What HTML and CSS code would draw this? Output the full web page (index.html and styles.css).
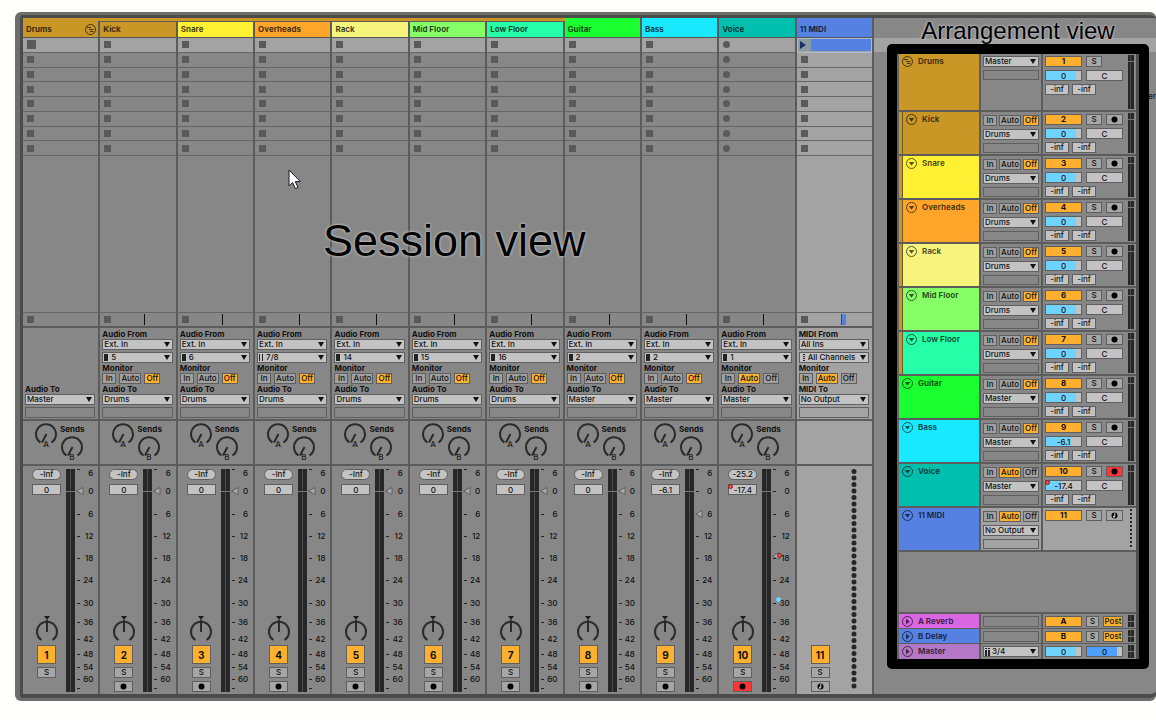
FILE: index.html
```html
<!DOCTYPE html>
<html lang="en">
  <head>
    <meta charset="UTF-8" />
    <meta name="viewport" content="width=device-width, initial-scale=1.0" />
    <link rel="stylesheet" href="styles.css">
    <title>Session view and Arrangement view</title>
  </head>
  <body>
    <main class="app">
      <section class="session">
        <div class="tracks" id="tracks"></div>
        <h1 class="session-title">Session view</h1>
        <svg class="cursor" width="14" height="21" viewBox="0 0 14 21">
          <path d="M1 1 V17 L4.6 13.6 L7.4 19.6 L10 18.4 L7.3 12.6 H12.4 Z" />
        </svg>
      </section>
      <section class="arrangement">
        <h2 class="arrangement-title">Arrangement view</h2>
        <div class="frame">
          <div class="rows" id="rows"></div>
          <div class="rows returns" id="returns"></div>
        </div>
        <span class="hidden-label">er</span>
      </section>
    </main>
    <script src="script.js"></script>
  </body>
</html>
```
FILE: styles.css
```css
* {
  box-sizing: border-box;
}
body {
  margin: 0;
  padding: 12px 0 19px 15px;
  min-height: 100vh;
  display: flex;
  background-color: #fffffb;
  color: #111;
  font-family: Inter, "Open Sans", sans-serif;
  font-size: 8px;
  font-weight: 500;
  line-height: 10px;
}
h1,
h2 {
  margin: 0;
  font-family: "Liberation Sans", Arial, sans-serif;
  font-weight: normal;
  color: #000;
  text-shadow: 0 0 3px #ccc, 0 0 2px #bbb;
  white-space: nowrap;
}
button,
input,
select {
  margin: 0;
  padding: 0;
  font: inherit;
  color: inherit;
  border: 1px solid #5f5f5f;
  border-radius: 0;
  background-color: #c3c3c3;
  appearance: none;
  text-align: center;
}
svg {
  display: block;
}
.app {
  flex: 1;
  display: flex;
  background-color: #878787;
  border: 3px solid #6d6d6d;
  border-left-width: 5px;
  border-right: 0;
  border-radius: 6px;
  box-shadow: inset 3px 3px 0 #4b4b4b, inset 0 -4px 0 #4b4b4b;
  padding: 3px 0 4px 3px;
}

/* Session */
.session {
  flex: 1;
  display: flex;
  position: relative;
}
.tracks {
  flex: 1;
  display: grid;
  grid-template-columns: repeat(11, 1fr);
}
.track {
  display: flex;
  flex-direction: column;
  border-right: 2px solid #5c5c5c;
  min-width: 0;
}
.track.midi {
  background-color: #a3a3a3;
}
.group-bar {
  height: 3px;
  margin-right: -2px;
  background-color: #c99726;
}
.track-name {
  flex: none;
  height: 20px;
  padding: 6px 2px 0 3px;
  display: flex;
  justify-content: space-between;
  border-bottom: 1px solid #555;
  font-weight: 700;
  color: rgba(0, 0, 0, 0.75);
}
.group-bar + .track-name {
  height: 17px;
  padding-top: 3px;
}
.group-bar + .track-name.child {
  padding-top: 2px;
  border-top: 1px solid #5c5c5c;
}
.slots {
  height: 118px;
  display: grid;
  grid-template-rows: repeat(8, 1fr);
}
.slot {
  display: flex;
  align-items: center;
  padding-left: 4px;
  border-width: 0 0 1px;
  border-color: #656565;
  background-color: transparent;
}
.slot:first-child {
  background-color: #a3a3a3;
}
.stop {
  width: 7px;
  height: 7px;
  background-color: #5a5a5a;
}
.stop.big {
  width: 9px;
  height: 9px;
}
.stop.round {
  border-radius: 50%;
}
.slot.clip {
  padding: 0;
  outline: 1px solid #a9bfd0;
  outline-offset: -1px;
}
.clip svg {
  width: 14px;
  height: 12px;
  background-color: #8a9ba3;
}
.clip-body {
  flex: 1;
  height: 12px;
  margin-right: 1px;
  background-color: #5581e3;
}
.empty {
  flex: 1;
}
.stop-row {
  height: 16px;
  display: flex;
  align-items: center;
  padding-left: 4px;
  border-top: 1px solid #656565;
  border-bottom: 2px solid #5c5c5c;
}
.playhead {
  width: 1px;
  height: 11px;
  margin-left: 33px;
  background-color: #111;
}
.midi .playhead {
  width: 5px;
  border-left: 1px solid #444;
  background-color: #5581e3;
}
.io {
  height: 93px;
  padding: 1px 3px 0 2px;
  display: flex;
  flex-direction: column;
  border-bottom: 2px solid #5c5c5c;
}
.io .label {
  font-weight: 700;
}
.io select {
  height: 11px;
}
.io select + select,
.io select + .box {
  margin-top: 2px;
}
.io .label.push {
  margin-top: 55px;
}
select {
  width: 100%;
  padding: 0 10px 0 1px;
  line-height: 9px;
  text-align: left;
  background-repeat: no-repeat;
  background-position: right 2px center, 1px center;
  background-image: url("data:image/svg+xml,%3Csvg xmlns='http://www.w3.org/2000/svg' width='6' height='5'%3E%3Cpath d='M0 0H6L3 5Z' fill='%23111'/%3E%3C/svg%3E");
}
select.mono {
  padding-left: 8px;
  background-image: url("data:image/svg+xml,%3Csvg xmlns='http://www.w3.org/2000/svg' width='6' height='5'%3E%3Cpath d='M0 0H6L3 5Z' fill='%23111'/%3E%3C/svg%3E"), url("data:image/svg+xml,%3Csvg xmlns='http://www.w3.org/2000/svg' width='4' height='7'%3E%3Cpath d='M0 0H4V7H0Z' fill='%23222'/%3E%3C/svg%3E");
}
select.stereo {
  padding-left: 8px;
  background-image: url("data:image/svg+xml,%3Csvg xmlns='http://www.w3.org/2000/svg' width='6' height='5'%3E%3Cpath d='M0 0H6L3 5Z' fill='%23111'/%3E%3C/svg%3E"), url("data:image/svg+xml,%3Csvg xmlns='http://www.w3.org/2000/svg' width='4' height='7'%3E%3Cpath d='M0 0H1V7H0ZM3 0H4V7H3Z' fill='%23222'/%3E%3C/svg%3E");
}
select.channels {
  padding-left: 8px;
  background-image: url("data:image/svg+xml,%3Csvg xmlns='http://www.w3.org/2000/svg' width='6' height='5'%3E%3Cpath d='M0 0H6L3 5Z' fill='%23111'/%3E%3C/svg%3E"), url("data:image/svg+xml,%3Csvg xmlns='http://www.w3.org/2000/svg' width='4' height='7'%3E%3Cpath d='M2 0H4V1H2ZM2 2H4V3H2ZM2 4H4V5H2ZM2 6H4V7H2Z' fill='%23222'/%3E%3C/svg%3E");
}
select.cue {
  background-image: url("data:image/svg+xml,%3Csvg xmlns='http://www.w3.org/2000/svg' width='6' height='5'%3E%3Cpath d='M0 0H6L3 5Z' fill='%23111'/%3E%3C/svg%3E"), url("data:image/svg+xml,%3Csvg xmlns='http://www.w3.org/2000/svg' width='5' height='8'%3E%3Cpath d='M0 0H2V1H0ZM0 2H2V8H0ZM3 0H5V1H3ZM3 2H5V8H3Z' fill='%23222'/%3E%3C/svg%3E");
  padding-left: 8px;
}
.box {
  height: 11px;
  border: 1px solid #5f5f5f;
}
.monitor {
  display: grid;
  grid-template-columns: 14px 22px 16px;
  column-gap: 3px;
}
.monitor button {
  height: 11px;
  line-height: 9px;
  background-color: #a0a0a0;
}
.monitor button.on,
.number {
  background-color: #ffb02e;
}
.sends {
  height: 45px;
  padding: 1px 0 0 11px;
  display: flex;
  gap: 2px;
  border-bottom: 2px solid #5c5c5c;
}
.sends .label {
  display: block;
  padding-top: 2px;
  height: 13px;
  font-weight: 700;
}
.knob {
  display: block;
  height: 28px;
  border: 0;
  background-color: transparent;
}
.knob svg {
  fill: none;
  stroke: #2b2b2b;
  stroke-width: 2px;
  overflow: visible;
}
.knob text,
.knob .mark {
  fill: #1d1d1d;
  stroke: none;
}
.mixer {
  height: 228px;
  padding: 3px 0 2px 9px;
  display: flex;
}
.strip {
  width: 29px;
  display: flex;
  flex-direction: column;
  align-items: center;
}
.peak,
.volume {
  width: 29px;
  height: 11px;
  line-height: 9px;
}
.peak {
  border-radius: 6px;
  margin-bottom: 4px;
}
.volume-wrap {
  position: relative;
}
.volume {
  display: block;
}
.dot {
  position: absolute;
  width: 5px;
  height: 5px;
  border: 1px solid #722;
  border-radius: 50%;
  background-color: #ff4b42;
}
.volume-wrap .dot {
  left: 0;
  top: 0;
}
.scale .dot.red {
  left: 4px;
  top: 84px;
}
.scale .dot.blue {
  left: 3px;
  top: 128px;
  border-color: #6fd3ff;
  background-color: #6fd3ff;
}
.pan {
  margin-top: auto;
  margin-bottom: 1px;
}
.number {
  width: 19px;
  height: 19px;
  font-size: 10px;
  font-weight: 700;
}
.solo,
.arm {
  width: 19px;
  height: 11px;
  margin-top: 3px;
  line-height: 9px;
  background-color: #a6a6a6;
  display: flex;
  align-items: center;
  justify-content: center;
}
.arm.on {
  background-color: #ff3338;
}
.arm.none {
  visibility: hidden;
}
.meter {
  position: relative;
  width: 9px;
  margin-left: 5px;
  border: solid #272727;
  border-width: 0 4px;
  background-color: #4a4a4a;
}
.meter::after {
  content: "";
  position: absolute;
  left: -4px;
  right: -4px;
  top: 22px;
  height: 1px;
  background-color: #777;
}
.scale {
  position: relative;
  flex: 1;
  margin: 0 5px 0 2px;
  display: grid;
  grid-template-rows: 18px 23px 22px 22px 22px 23px 19px 17px 15px 13px 12px 9px 8px;
}
.scale span {
  display: flex;
  justify-content: space-between;
  height: 9px;
  line-height: 9px;
}
.scale span::before {
  content: "";
  width: 3px;
  height: 1px;
  margin-top: 4px;
  background-color: #222;
}
.scale span:first-child::before {
  margin-top: 0;
}
.fader {
  position: absolute;
  left: -2px;
  top: 0;
  width: 9px;
  height: 220px;
  writing-mode: vertical-lr;
  direction: rtl;
  border: 0;
  background-color: transparent;
}
.fader::-webkit-slider-runnable-track {
  width: 9px;
  height: 220px;
}
.fader::-webkit-slider-thumb {
  appearance: none;
  width: 9px;
  height: 8px;
  background: url("data:image/svg+xml,%3Csvg xmlns='http://www.w3.org/2000/svg' width='9' height='8'%3E%3Cpath d='M8 .5V7.5L1.5 4Z' fill='%23aaa' stroke='%23606060'/%3E%3C/svg%3E") no-repeat;
}
.midi-meter {
  margin-left: 16px;
  stroke: #272727;
  stroke-width: 5px;
  stroke-linecap: round;
  stroke-dasharray: 0 6.5;
}
.session-title {
  position: absolute;
  left: 300px;
  top: 197px;
  font-size: 45px;
  line-height: 52px;
}
.cursor {
  position: absolute;
  left: 265px;
  top: 151px;
  fill: #fff;
  stroke: #1a1a2a;
}

/* Arrangement */
.arrangement {
  width: 282px;
  padding: 0 7px 25px 13px;
  display: flex;
  flex-direction: column;
  position: relative;
  background: linear-gradient(#a3a3a3, #a3a3a3) 0 20px / 100% 14px no-repeat;
}
.arrangement-title {
  height: 26px;
  font-size: 24px;
  line-height: 26px;
  text-align: center;
}
.frame {
  flex: 1;
  display: flex;
  flex-direction: column;
  justify-content: space-between;
  padding: 10px;
  border-radius: 5px;
  background: linear-gradient(#878787, #878787) content-box, #000;
}
.hidden-label {
  position: absolute;
  right: 0;
  top: 73px;
}
.rows {
  border-left: 2px solid #666;
  border-right: 3px solid #4f4f4f;
}
.frame .rows:first-child {
  flex: 1;
}
.returns {
  border-top: 2px solid #5c5c5c;
}
.row {
  height: 44px;
  display: grid;
  grid-template-columns: 80px 64px 1fr;
  border-bottom: 2px solid #5c5c5c;
}
.row.tall {
  height: 58px;
}
.row.midi {
  background-color: #a3a3a3;
}
.row-name {
  padding: 2px 0 0 3px;
  display: flex;
  gap: 5px;
  font-weight: 700;
  color: rgba(0, 0, 0, 0.7);
}
.child .row-name {
  border-left: 1px solid #6b5a2a;
  box-shadow: -3px 0 0 #c99726;
  margin-left: 3px;
}
.row-io {
  padding: 3px 2px 0 2px;
  display: flex;
  flex-direction: column;
  gap: 3px;
  border: solid #5c5c5c;
  border-width: 0 2px;
}
.tall .row-io {
  padding-top: 2px;
}
.row-io .monitor {
  column-gap: 2px;
}
.row-io select,
.row-io .box,
.row-io button,
.row-mix button,
.row-mix input {
  flex: none;
  height: 11px;
  line-height: 9px;
}
.row-io .box {
  height: 10px;
}
.row-mix {
  padding: 2px 0 0 2px;
  display: grid;
  grid-template-columns: 37px 16px 17px;
  grid-auto-rows: 11px;
  gap: 3px 4px;
}
.row-mix .number {
  width: auto;
  font-size: 8px;
}
.row-mix .arm,
.row-mix .solo {
  width: auto;
  margin: 0;
}
.row-mix .level {
  position: relative;
}
.row-mix .level .dot {
  left: 0;
  top: 0;
}
.row-mix .level input {
  display: block;
  width: 37px;
}
.row-mix .pan-value {
  grid-column: span 2;
  width: 37px;
}
.peaks {
  grid-column: span 3;
  display: flex;
  gap: 3px;
}
.peaks button {
  width: 24px;
}
.row-main {
  display: grid;
  grid-template-columns: 83px 6px;
  justify-content: start;
  gap: 2px;
}
.row .meter {
  width: 6px;
  margin: 1px 0 1px 0;
  border-width: 0 3px 0 2px;
}
.row .meter::after {
  left: -2px;
  right: -3px;
  top: 6px;
}
.row-dots {
  width: 2px;
  margin: 1px 0 2px 2px;
  background: repeating-linear-gradient(#272727 0 2px, transparent 2px 4px);
}
.returns .row {
  height: 15px;
  border-bottom-width: 1px;
}
.returns .row:last-child {
  border-bottom: 0;
}
.returns .row-io {
  padding-top: 2px;
}
.returns .row-io .box {
  height: 11px;
}
.returns .row-mix.send {
  grid-template-columns: 37px 13px 20px;
}
.post {
  background-color: #ffb02e;
}
```
FILE: script.js
```js
const tracks = [
    { name: 'Drums', color: '#c99726', group: true, to: 'Master' },
    { name: 'Kick', color: '#c99726', child: true, input: '5', to: 'Drums' },
    { name: 'Snare', color: '#fff033', child: true, input: '6', to: 'Drums' },
    { name: 'Overheads', color: '#ffa529', child: true, input: '7/8', icon: 'stereo', to: 'Drums' },
    { name: 'Rack', color: '#f6f47c', child: true, input: '14', to: 'Drums' },
    { name: 'Mid Floor', color: '#87ff67', child: true, input: '15', to: 'Drums' },
    { name: 'Low Floor', color: '#25ffa8', child: true, input: '16', to: 'Drums' },
    { name: 'Guitar', color: '#1aff2f', input: '2', to: 'Master' },
    { name: 'Bass', color: '#19e9ff', input: '2', to: 'Master', volume: '-6.1', fader: 171, fill: 71 },
    { name: 'Voice', color: '#00bfaf', input: '1', to: 'Master', monitor: 'Auto', peak: '-25.2', volume: '-17.4', fader: 129, fill: 43, armed: true },
    { name: '11 MIDI', color: '#5581e3', midi: true, input: 'All Channels', icon: 'channels', to: 'No Output', monitor: 'Auto' },
  ],
  levels = [6, 0, 6, 12, 18, 24, 30, 36, 42, 48, 54, 60, ''];

const groupIcon = `<svg width="11" height="11" viewBox="0 0 11 11" fill="none" stroke="#000" opacity=".65">
    <circle cx="5.5" cy="5.5" r="5" /><path d="M2 3.5H6M4 5.5H8.5M5 7.5H8.5" /></svg>`,
  foldIcon = `<svg width="11" height="11" viewBox="0 0 11 11" stroke="#000" fill="none" opacity=".65">
    <circle cx="5.5" cy="5.5" r="5" /><path d="M2.8 4H8.2L5.5 7.8Z" fill="#000" stroke="none" /></svg>`,
  playIcon = `<svg width="11" height="11" viewBox="0 0 11 11" stroke="#000" fill="none" opacity=".65">
    <circle cx="5.5" cy="5.5" r="5" /><path d="M4 2.8V8.2L7.8 5.5Z" fill="#000" stroke="none" /></svg>`,
  recIcon = '<svg width="7" height="7" viewBox="0 0 7 7"><circle cx="3.5" cy="3.5" r="3" /></svg>',
  midiRecIcon = `<svg width="7" height="7" viewBox="0 0 7 7"><circle cx="3.5" cy="3.5" r="3" />
    <path d="M3.8 1V4.5" stroke="#ddd" fill="none" /><circle cx="3" cy="4.8" r="1" fill="#ddd" /></svg>`;

function select(label, value, icon = '') {
  return `<select class="${icon}" aria-label="${label}"><option>${value}</option></select>`;
}

function monitor(track) {
  const active = track.monitor || 'Off';
  return `<div class="monitor">${['In', 'Auto', 'Off']
    .map((mode) => `<button class="${mode === active ? 'on' : ''}">${mode}</button>`)
    .join('')}</div>`;
}

function arm(track) {
  const state = track.group ? 'none' : track.armed ? 'on' : '';
  return `<button class="arm ${state}" aria-label="Arm">${track.midi ? midiRecIcon : recIcon}</button>`;
}

function knob(letter) {
  return `<button class="knob" aria-label="Send ${letter}"><svg width="24" height="28" viewBox="0 0 24 28">
    <path d="M6.5 20.5A10 10 0 1 1 17.5 20.5" />
    <path d="M12.5 12L8 20.5" /><text x="12" y="25" font-size="8" font-weight="500" text-anchor="middle">${letter}</text></svg></button>`;
}

function slots(track, index) {
  let html = '';
  for (let i = 0; i < 8; i++) {
    if (track.midi && i === 0) {
      html += `<button class="slot clip" aria-label="Launch clip"><svg viewBox="0 0 14 12"><path d="M3 2V10L9 6Z" fill="#1c2f66" /></svg><span class="clip-body"></span></button>`;
      continue;
    }
    const shape = track.name === 'Voice' ? 'round' : index === 0 && i === 0 ? 'big' : '';
    html += `<button class="slot" aria-label="Slot ${i + 1}"><span class="stop ${shape}"></span></button>`;
  }
  return html;
}

function io(track) {
  const kind = track.midi ? 'MIDI' : 'Audio';
  if (track.group) {
    return `<span class="label push">Audio To</span>${select('Audio To', track.to)}<div class="box"></div>`;
  }
  return `<span class="label">${kind} From</span>
    ${select(kind + ' From', track.midi ? 'All Ins' : 'Ext. In')}
    ${select('Channel', track.input, track.icon || 'mono')}
    <span class="label">Monitor</span>${monitor(track)}
    <span class="label">${kind} To</span>${select(kind + ' To', track.to)}<div class="box"></div>`;
}

function mixer(track, index) {
  const controls = `<button class="number">${index + 1}</button><button class="solo">S</button>${arm(track)}`;
  if (track.midi) {
    return `<div class="strip"><span class="pan"></span>${controls}</div>
      <svg class="midi-meter" width="6" height="223"><path d="M3 2.5V217.5" /></svg>`;
  }
  return `<div class="strip">
      <button class="peak">${track.peak || '-Inf'}</button>
      <div class="volume-wrap"><input class="volume" aria-label="Volume" value="${track.volume || 0}">
      ${track.armed ? '<i class="dot"></i>' : ''}</div>
      <button class="knob pan" aria-label="Pan"><svg width="24" height="28" viewBox="0 0 24 28">
        <path d="M6.5 24A10 10 0 1 1 17.5 24" /><path d="M12 4V16" /><path class="mark" d="M9 0H15L12 4Z" /></svg></button>
      ${controls}
    </div>
    <div class="meter"></div>
    <div class="scale">${levels.map((level) => `<span>${level}</span>`).join('')}
      <input class="fader" type="range" min="0" max="212" value="${track.fader || 194}" aria-label="Fader">
      ${track.armed ? '<i class="dot red"></i><i class="dot blue"></i>' : ''}
    </div>`;
}

function level(value, fill, color = '#6fd3ff') {
  return `<input aria-label="Level" value="${value}" style="background-image: linear-gradient(90deg, ${color} ${fill}%, transparent ${fill}%)">`;
}

document.getElementById('tracks').innerHTML = tracks
  .map(
    (track, index) => `<div class="track ${track.midi ? 'midi' : ''}">
      ${track.group || track.child ? '<div class="group-bar"></div>' : ''}
      <div class="track-name ${track.child ? 'child' : ''}" style="background-color: ${track.color}">${track.name}${track.group ? groupIcon : ''}</div>
      <div class="slots">${slots(track, index)}</div>
      <div class="empty"></div>
      <div class="stop-row"><span class="stop"></span>${track.group ? '' : '<span class="playhead"></span>'}</div>
      <div class="io">${io(track)}</div>
      <div class="sends">${track.midi ? '' : `${knob('A')}<div><span class="label">Sends</span>${knob('B')}</div>`}</div>
      <div class="mixer">${mixer(track, index)}</div>
    </div>`
  )
  .join('');

document.getElementById('rows').innerHTML = tracks
  .map(
    (track, index) => `<div class="row ${track.group ? 'tall' : ''} ${track.child ? 'child' : ''} ${track.midi ? 'midi' : ''}">
      <div class="row-name" style="background-color: ${track.color}">${track.group ? groupIcon : foldIcon}${track.name}</div>
      <div class="row-io">${track.group ? '' : monitor(track)}${select('Output', track.to)}<div class="box"></div></div>
      <div class="row-main">
        <div class="row-mix">
          <button class="number">${index + 1}</button><button class="solo">S</button>${arm(track)}
          ${
            track.midi
              ? ''
              : `<div class="level">${level(track.volume || 0, track.fill || 85)}${track.armed ? '<i class="dot"></i>' : ''}</div>
                <input class="pan-value" aria-label="Pan" value="C">
                <div class="peaks"><button>-inf</button><button>-inf</button></div>`
          }
        </div>
        <div class="${track.midi ? 'row-dots' : 'meter'}"></div>
      </div>
    </div>`
  )
  .join('');

document.getElementById('returns').innerHTML = [
  { name: 'A Reverb', color: '#d966e2', send: 'A' },
  { name: 'B Delay', color: '#5581e3', send: 'B' },
  { name: 'Master', color: '#b477c6' },
]
  .map(
    (track) => `<div class="row">
      <div class="row-name" style="background-color: ${track.color}">${playIcon}${track.name}</div>
      <div class="row-io">${track.send ? '<div class="box"></div>' : select('Cue Out', '3/4', 'cue')}</div>
      <div class="row-main">
        ${
          track.send
            ? `<div class="row-mix send"><button class="number">${track.send}</button><button class="solo">S</button><button class="post">Post</button></div>`
            : `<div class="row-mix"><div class="level">${level(0, 85)}</div><div class="level pan-value">${level(0, 85, '#4ca0ff')}</div></div>`
        }
        <div class="meter"></div>
      </div>
    </div>`
  )
  .join('');
```
